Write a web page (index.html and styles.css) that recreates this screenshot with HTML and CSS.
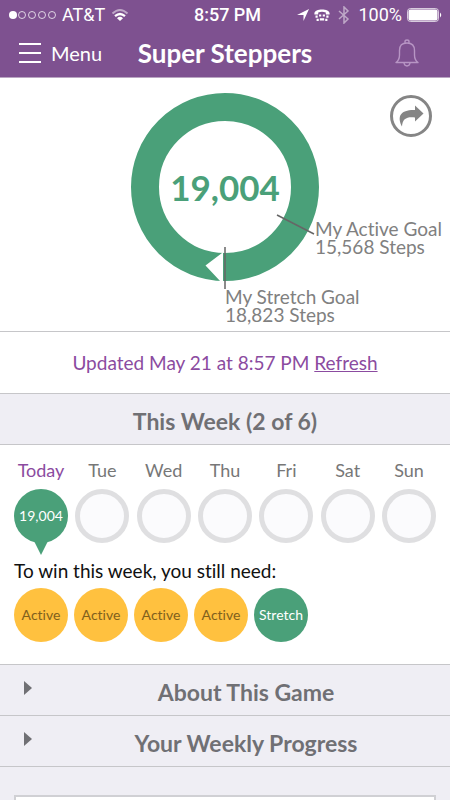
FILE: index.html
```html
<!DOCTYPE html>
<html lang="en">
<head>
<meta charset="utf-8">
<meta name="viewport" content="width=device-width, initial-scale=1">
<title>Super Steppers</title>
<link rel="stylesheet" href="styles.css">
</head>
<body>
<header class="top">
  <div class="status">
    <div class="status-side">
      <svg class="signal" width="48" height="10" viewBox="0 0 48 10" aria-hidden="true"><circle cx="5" cy="5" r="4" fill="#fff"/><g fill="none" stroke="#fff" stroke-opacity=".75"><circle cx="14" cy="5" r="3.5"/><circle cx="24" cy="5" r="3.5"/><circle cx="34" cy="5" r="3.5"/><circle cx="44" cy="5" r="3.5"/></g></svg>
      <span class="carrier">AT&amp;T</span>
      <svg class="wifi" width="18" height="14" viewBox="0 0 18 14" fill="none" stroke="#fff" stroke-width="2" aria-hidden="true"><path d="M1.500 5.500Q9-1.500 16.500 5.500" opacity=".5"/><path d="M4 8.200Q9 3.800 14 8.200" stroke-width="2.200"/><path d="M6 10.200Q9 7.500 12 10.200L9 13Z" fill="#fff" stroke="none"/></svg>
    </div>
    <time class="clock">8:57 PM</time>
    <div class="status-side status-end">
      <svg width="12" height="12" viewBox="0 0 12 12" fill="#fff" aria-hidden="true"><path d="M12 0L6.500 12V6H0Z"/></svg>
      <svg class="tty" width="16" height="13" viewBox="0 0 14 12" aria-hidden="true"><path d="M0 4C0-.8 14-.8 14 4V5H10.500V3.200C8 2.400 6 2.400 3.500 3.200V5H0Z" fill="#fff"/><g fill="#fff"><path d="M1 6h2v2H1zM4.300 5h2v2h-2zM7.700 5h2v2h-2zM11 6h2v2h-2zM2 9h2v2H2zM5 8.500h4v2H5zM10 9h2v2h-2z"/></g></svg>
      <svg class="bluetooth" width="12" height="18" viewBox="0 0 12 18" fill="none" stroke="#fff" stroke-width="1.500" aria-hidden="true"><path d="M1 5L10 13L6 17V1L10 5L1 13"/></svg>
      <span>100%</span>
      <svg class="battery" width="35" height="14" viewBox="0 0 35 14" aria-hidden="true"><rect x=".5" y=".5" width="31" height="13" rx="3" fill="none" stroke="#fff" stroke-opacity=".7"/><rect x="1.500" y="1.500" width="29" height="11" rx="2" fill="#fff"/><path d="M33 4.500Q35.500 7 33 9.500Z" fill="#fff"/></svg>
    </div>
  </div>
  <nav class="nav">
    <button class="menu" type="button">
      <svg width="22" height="20" viewBox="0 0 22 20" stroke="#fff" stroke-width="2" aria-hidden="true"><path d="M0 1H22M0 10H22M0 19H22"/></svg>
      Menu
    </button>
    <h1 class="title">Super Steppers</h1>
    <button class="bell" type="button" aria-label="Notifications">
      <svg width="24" height="28" viewBox="0 0 24 28" fill="none" stroke="#b795c4" stroke-width="1.400" stroke-linejoin="round" aria-hidden="true"><path d="M10 4.200V2.500Q10 1 12 1T14 2.500V4.200M1 23.500Q4.500 21 4.500 16V11.500Q4.500 4 12 4T19.500 11.500V16Q19.500 21 23 23.500Z"/><path d="M9 24Q9.500 27 12 27T15 24"/></svg>
    </button>
  </nav>
</header>
<main class="main">
  <section class="hero">
    <div class="chart">
      <svg width="188" height="210" viewBox="0 0 188 210" aria-hidden="true">
        <circle cx="94" cy="94" r="80" fill="none" stroke="#4aa079" stroke-width="28"/>
        <path d="M92 159V189H90L74.500 172.500L91 160Z" fill="#fff"/>
        <path d="M91 161L90.500 188" stroke="#fff" stroke-width="2"/>
        <path d="M94 154V196M146 122L183 141" stroke="#666" stroke-width="1.500"/>
      </svg>
      <strong class="total">19,004</strong>
      <p class="goal goal-active">My Active Goal<br>15,568 Steps</p>
      <p class="goal goal-stretch">My Stretch Goal<br>18,823 Steps</p>
    </div>
    <button class="share" type="button" aria-label="Share">
      <svg width="42" height="42" viewBox="0 0 42 42" aria-hidden="true"><circle cx="21" cy="21" r="19.500" fill="none" stroke="#858585" stroke-width="3"/><path d="M25 10.500L33.500 18.500L25 26.500V22.500C17 21.500 12.500 23.500 12 31.500C6.500 21 11 14.500 25 15Z" fill="#858585"/></svg>
    </button>
  </section>
  <p class="updated">Updated May 21 at 8:57 PM <a href="#">Refresh</a></p>
  <h2 class="bar">This Week (2 of 6)</h2>
  <section class="week">
    <ol class="days">
      <li class="day today"><span class="name">Today</span><span class="disc done">19,004</span></li>
      <li class="day"><span class="name">Tue</span><span class="disc"></span></li>
      <li class="day"><span class="name">Wed</span><span class="disc"></span></li>
      <li class="day"><span class="name">Thu</span><span class="disc"></span></li>
      <li class="day"><span class="name">Fri</span><span class="disc"></span></li>
      <li class="day"><span class="name">Sat</span><span class="disc"></span></li>
      <li class="day"><span class="name">Sun</span><span class="disc"></span></li>
    </ol>
    <p class="need">To win this week, you still need:</p>
    <ul class="needs">
      <li class="pill">Active</li>
      <li class="pill">Active</li>
      <li class="pill">Active</li>
      <li class="pill">Active</li>
      <li class="pill stretch">Stretch</li>
    </ul>
  </section>
  <button class="bar fold" type="button"><span class="arrow"></span><span class="label">About This Game</span></button>
  <button class="bar fold" type="button"><span class="arrow"></span><span class="label">Your Weekly Progress</span></button>
  <div class="panel"></div>
</main>
</body>
</html>
```
FILE: styles.css
```css
* { box-sizing: border-box; }
body {
  margin: 0;
  min-height: 100vh;
  display: flex;
  flex-direction: column;
  background: #efeef4;
  color: #111;
  font-family: Lato, "Open Sans", sans-serif;
  font-variant-ligatures: none;
}
h1, h2, p, ol, ul { margin: 0; padding: 0; }
ol, ul { list-style: none; }
button { border: 0; padding: 0; background: none; color: inherit; font: inherit; font-variant-ligatures: none; }
svg { display: block; flex: none; }

.top { background: #7e5190; color: #fff; border-bottom: 1px solid #b9a5c2; }
.status {
  display: grid;
  grid-template-columns: 1fr auto 1fr;
  align-items: center;
  height: 30px;
  padding: 0 8px;
  font: 18px/22px Roboto, sans-serif;
}
.status-side { display: flex; align-items: center; gap: 6px; }
.status-end { justify-content: flex-end; gap: 5px; }
.clock { padding-left: 5px; font-weight: 500; }
.bluetooth { margin: 0 3px; opacity: .5; }

.nav {
  display: grid;
  grid-template-columns: 1fr auto 1fr;
  align-items: center;
  height: 47px;
  padding: 0 19px 2px;
}
.menu { display: flex; align-items: center; gap: 10px; font-size: 20px; line-height: 24px; }
.title { font-size: 26px; line-height: 30px; font-weight: 700; }
.bell { justify-self: end; margin-right: 12px; }

.main { flex: 1; display: flex; flex-direction: column; }
.hero {
  position: relative;
  display: flex;
  justify-content: center;
  height: 254px;
  padding-top: 15px;
  background: #fff;
  border-bottom: 1px solid #c6c6c9;
}
.chart { position: relative; width: 188px; }
.total {
  position: absolute;
  inset: 0 0 auto;
  color: #4aa079;
  font-size: 35px;
  line-height: 188px;
  text-align: center;
}
.goal {
  position: absolute;
  color: #808080;
  font-size: 19px;
  line-height: 18px;
  white-space: nowrap;
}
.goal-active { left: 184px; top: 127px; }
.goal-stretch { left: 94px; top: 195px; }
.share { position: absolute; right: 18px; top: 17px; }

.updated {
  background: #fff;
  color: #8b4ba0;
  font-size: 19px;
  line-height: 61px;
  text-align: center;
}
.updated a { color: inherit; }

.bar {
  padding: 4px 0 0;
  border-top: 1px solid #c6c6c9;
  background: #efeef4;
  color: #707074;
  font-size: 23px;
  font-weight: 700;
  line-height: 46px;
  text-align: center;
}
.week { padding: 14px 14px 22px; background: #fff; border-top: 1px solid #c6c6c9; }
.days { display: flex; justify-content: space-between; }
.day {
  display: flex;
  flex-direction: column;
  align-items: center;
  gap: 8px;
  width: 54px;
  color: #777;
  font-size: 18px;
  line-height: 22px;
}
.today .name { color: #8b4ba0; }
.disc {
  width: 54px;
  height: 54px;
  border: 5px solid #dfdfe1;
  border-radius: 50%;
  background: #fbfbfd;
}
.done {
  position: relative;
  border: 0;
  background: #4aa079;
  color: #fff;
  font-size: 14px;
  line-height: 54px;
  text-align: center;
}
.done::after {
  content: "";
  position: absolute;
  left: 20px;
  top: 52px;
  border: 7px solid transparent;
  border-top: 14px solid #4aa079;
  border-bottom: 0;
}
.need { margin-top: 16px; font-size: 19px; line-height: 24px; }
.needs { display: flex; gap: 6px; margin-top: 5px; }
.pill {
  width: 54px;
  height: 54px;
  border-radius: 50%;
  background: #ffc13f;
  color: #80601d;
  font-size: 14px;
  line-height: 54px;
  text-align: center;
}
.stretch { background: #4aa079; color: #fff; }

.fold { display: flex; align-items: center; padding-left: 24px; }
.arrow {
  margin: 0 10px 8px 0;
  border: 7px solid transparent;
  border-left: 8px solid #707074;
  border-right: 0;
}
.label { flex: 1; }
.panel {
  flex: 1;
  padding-top: 28px;
  border-top: 1px solid #c6c6c9;
}
.panel::before {
  content: "";
  display: block;
  height: 100%;
  min-height: 5px;
  margin: 0 14px;
  border: 2px solid #d0d0d4;
  border-bottom: 0;
  background: #fff;
}
```
